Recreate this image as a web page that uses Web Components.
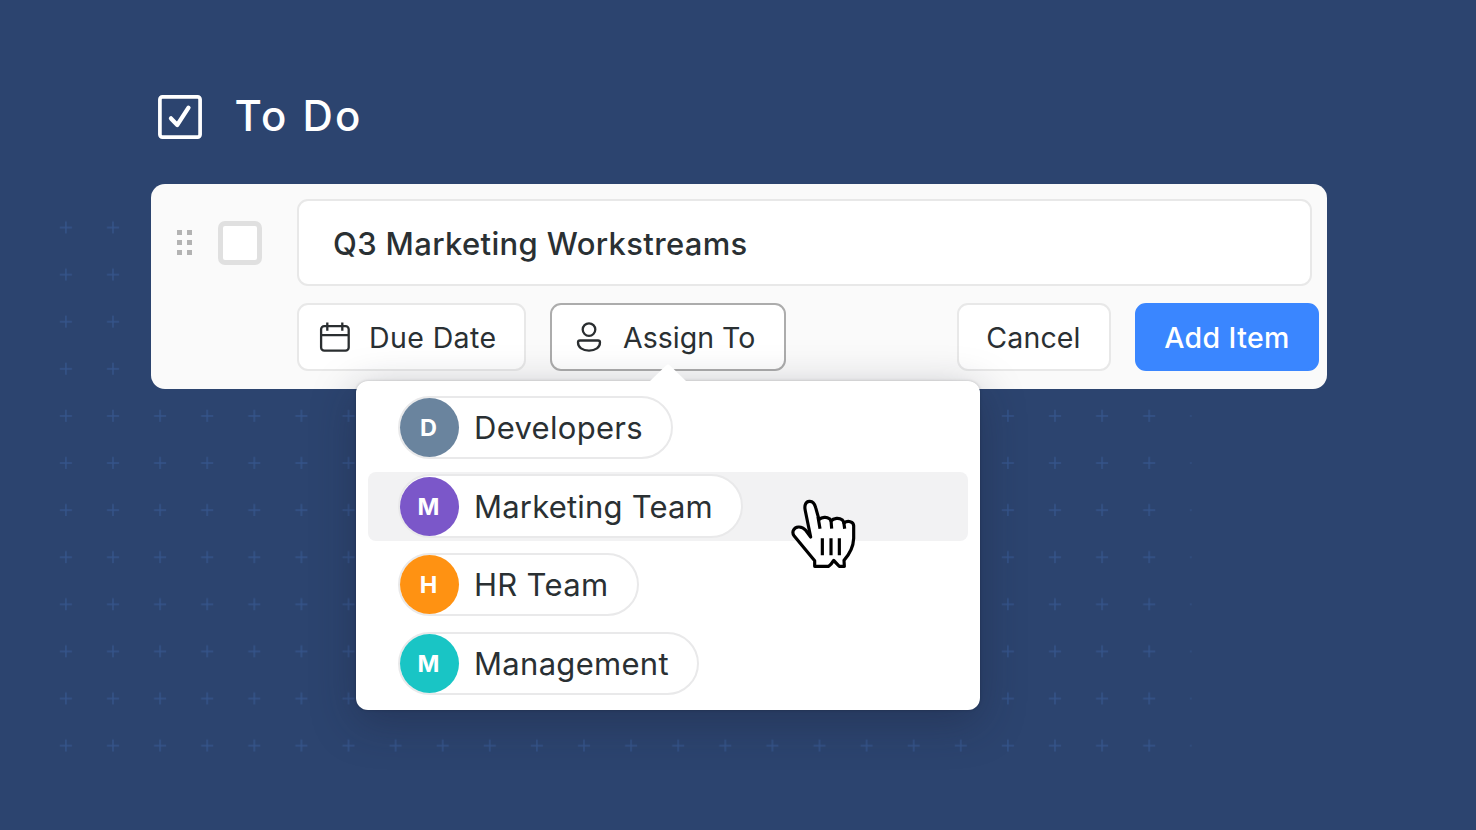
<!DOCTYPE html>
<html lang="en">
<head>
<meta charset="utf-8">
<title>To Do</title>
<style>
    body {
        margin: 0;
        width: 1476px;
        height: 830px;
        overflow: hidden;
        background: #2c446f;
        color: #2a3033;
        font-family: Inter, "Liberation Sans", sans-serif;
    }
</style>
</head>
<body>
<todo-board>
    <todo-heading slot="heading">To Do</todo-heading>
    <todo-card text="Q3 Marketing Workstreams">
        <todo-button slot="tools" icon="calendar" style="--width: 229px; --pad: 20.5px; --icon-gap: 18px; --spacing: 0.4px">Due Date</todo-button>
        <todo-button slot="tools" icon="person" active style="--width: 236px; --pad: 21px; --icon-gap: 18px; --spacing: 0px">Assign To
            <assign-menu slot="menu">
                <assign-option initial="D" color="#6a849e" style="--width: 275px">Developers</assign-option>
                <assign-option initial="M" color="#7b57c9" style="--width: 345px; --spacing: 0.2px" active>Marketing Team</assign-option>
                <assign-option initial="H" color="#ff9212" style="--width: 241px">HR Team</assign-option>
                <assign-option initial="M" color="#19c5c5" style="--width: 301px">Management</assign-option>
                <hand-pointer slot="pointer"></hand-pointer>
            </assign-menu>
        </todo-button>
        <todo-button slot="actions" style="--width: 154px; --spacing: 0.15px">Cancel</todo-button>
        <todo-button slot="actions" primary style="--width: 184px; --spacing: 0.4px">Add Item</todo-button>
    </todo-card>
</todo-board>

<script>
const ICONS = {
    calendar: `
        <svg width="32" height="32" viewBox="0 0 32 32" fill="none" stroke="#2a2e30" stroke-width="2.3">
            <rect x="2.1" y="5.1" width="27.6" height="24.5" rx="3.2"/>
            <path d="M2 14.2h28M8.3 1.6v8.2M23.3 1.6v8.2"/>
        </svg>`,
    person: `
        <svg width="32" height="32" viewBox="0 0 32 32" fill="none" stroke="#2a2e30" stroke-width="2.3">
            <circle cx="16" cy="8.6" r="6.3"/>
            <path d="M7 19.5h18q2 0 2 2c0 5-4.5 8.1-11 8.1S5 26.5 5 21.5q0-2 2-2z"/>
        </svg>`
};

// Page area with the faint grid of plus signs behind the content
class TodoBoard extends HTMLElement {
    constructor() {
        super();
        this.attachShadow({ mode: 'open' });
        this.shadowRoot.innerHTML = `
        <style>
            :host {
                display: flex;
                flex-direction: column;
                position: relative;
                box-sizing: border-box;
                height: 830px;
                padding: 92px 149.5px 0 150.5px;
            }
            .grid {
                position: absolute;
                left: 42px;
                top: 204px;
            }
            .content {
                position: relative;
                display: flex;
                flex-direction: column;
                gap: 44px;
            }
        </style>
        <svg class="grid" width="1149.5" height="566">
            <defs>
                <pattern id="plus" x="0.4" width="47.1" height="47.1" patternUnits="userSpaceOnUse">
                    <path d="M17.5 23.5h12M23.5 17.5v12" stroke="#35548a" stroke-width="1.4"/>
                </pattern>
            </defs>
            <rect width="1149.5" height="566" fill="url(#plus)"/>
        </svg>
        <div class="content">
            <slot name="heading"></slot>
            <slot></slot>
        </div>
        `;
    }
}

class TodoHeading extends HTMLElement {
    constructor() {
        super();
        this.attachShadow({ mode: 'open' });
        this.shadowRoot.innerHTML = `
        <style>
            :host {
                display: flex;
                align-items: center;
                gap: 32px;
                height: 48px;
                padding-left: 6px;
                color: white;
                font-size: 42px;
                font-weight: 500;
                letter-spacing: 2.4px;
                line-height: 48px;
            }
            svg {
                margin-top: 1px;
            }
        </style>
        <svg width="46" height="46" viewBox="0 0 46 46" fill="none" stroke="white">
            <rect x="2.9" y="2.9" width="40.2" height="40.2" rx="2.5" stroke-width="3.7"/>
            <path d="M14 24.4l6.3 6.5L31.500 13.700" stroke-width="4.3" stroke-linecap="round" stroke-linejoin="round"/>
        </svg>
        <slot></slot>
        `;
    }
}

class TodoCard extends HTMLElement {
    constructor() {
        super();
        this.attachShadow({ mode: 'open' });
        this.shadowRoot.innerHTML = `
        <style>
            :host {
                display: flex;
                box-sizing: border-box;
                height: 204.5px;
                padding: 15px 7.5px 0 26.5px;
                border-radius: 14px;
                background: #fafafa;
            }
            .handle {
                display: flex;
                align-items: center;
                gap: 26px;
                width: 119.5px;
                height: 87px;
            }
            .grip {
                display: grid;
                grid-template-columns: 5px 5px;
                gap: 5px;
            }
            .grip i {
                height: 5px;
                background: #b3b3b3;
            }
            .check {
                box-sizing: border-box;
                width: 44px;
                height: 44px;
                border: 5px solid #e0e0e0;
                border-radius: 7px;
                background: white;
            }
            .main {
                flex: 1;
                display: flex;
                flex-direction: column;
                gap: 17px;
            }
            .input {
                box-sizing: border-box;
                height: 87px;
                margin-right: 7.5px;
                padding: 2px 0 0 34.5px;
                border: 2.5px solid #e8e8e8;
                border-radius: 11px;
                background: white;
                font-size: 31px;
                font-weight: 500;
                letter-spacing: 0.35px;
                line-height: 82px;
                white-space: nowrap;
            }
            .row {
                display: flex;
                justify-content: space-between;
            }
            .group {
                display: flex;
                gap: 24.5px;
            }
        </style>
        <div class="handle">
            <div class="grip"><i></i><i></i><i></i><i></i><i></i><i></i></div>
            <div class="check"></div>
        </div>
        <div class="main">
            <div class="input"></div>
            <div class="row">
                <div class="group"><slot name="tools"></slot></div>
                <div class="group"><slot name="actions"></slot></div>
            </div>
        </div>
        `;
    }

    connectedCallback() {
        this.shadowRoot.querySelector('.input').textContent = this.getAttribute('text');
    }
}

class TodoButton extends HTMLElement {
    constructor() {
        super();
        this.attachShadow({ mode: 'open' });
        this.shadowRoot.innerHTML = `
        <style>
            :host {
                display: block;
                position: relative;
                width: var(--width);
            }
            .button {
                display: flex;
                align-items: center;
                justify-content: center;
                box-sizing: border-box;
                height: 68px;
                border: 2.5px solid #e8e8e8;
                border-radius: 11px;
                background: white;
                font-size: 28.5px;
                letter-spacing: var(--spacing);
                white-space: nowrap;
            }
            .icon {
                display: flex;
                margin-right: var(--icon-gap);
            }
            .icon:empty {
                display: none;
            }
            :host([icon]) .button {
                justify-content: flex-start;
                padding-left: var(--pad);
            }
            :host([active]) .button {
                border: 2px solid #acacac;
            }
            :host([primary]) .button {
                border-color: #3a86ff;
                background: #3a86ff;
                color: white;
                font-weight: 500;
            }
        </style>
        <div class="button"><span class="icon"></span><span><slot></slot></span></div>
        <slot name="menu"></slot>
        `;
    }

    connectedCallback() {
        this.shadowRoot.querySelector('.icon').innerHTML = ICONS[this.getAttribute('icon')] || '';
    }
}

// Popover that hangs below the button it belongs to
class AssignMenu extends HTMLElement {
    constructor() {
        super();
        this.attachShadow({ mode: 'open' });
        this.shadowRoot.innerHTML = `
        <style>
            :host {
                position: absolute;
                z-index: 1;
                top: 77.5px;
                left: -194px;
                display: flex;
                flex-direction: column;
                gap: 9.6px;
                box-sizing: border-box;
                width: 623.5px;
                height: 329.5px;
                padding: 12.5px 12px 0;
                border-radius: 12px;
                background: white;
                box-shadow: 0 0 3px rgba(0, 0, 0, 0.22), 0 12px 44px rgba(25, 30, 50, 0.34);
            }
            .arrow {
                position: absolute;
                top: -18px;
                left: 292px;
            }
        </style>
        <svg class="arrow" width="40" height="21" viewBox="0 0 40 21">
            <path d="M1.5 18.5L18 2.5q2-1.8 4 0L38.5 18.5V21h-37z" fill="white"/>
        </svg>
        <slot></slot>
        <slot name="pointer"></slot>
        `;
    }
}

class AssignOption extends HTMLElement {
    constructor() {
        super();
        this.attachShadow({ mode: 'open' });
        this.shadowRoot.innerHTML = `
        <style>
            :host {
                display: flex;
                align-items: center;
                box-sizing: border-box;
                height: 69px;
                padding-left: 30px;
                border-radius: 8px;
                --spacing: 0.3px;
            }
            :host([active]) {
                background: #f2f2f3;
            }
            .pill {
                display: flex;
                align-items: center;
                gap: 15px;
                box-sizing: border-box;
                width: var(--width);
                height: 63.5px;
                border: 2px solid #e9e9ea;
                border-radius: 32px;
                background: white;
                font-size: 31px;
                letter-spacing: var(--spacing);
                white-space: nowrap;
            }
            .avatar {
                flex: none;
                width: 59px;
                height: 59px;
                border-radius: 50%;
                color: white;
                font-size: 23.5px;
                font-weight: 700;
                letter-spacing: 0;
                line-height: 59px;
                text-align: center;
                text-indent: -2px;
            }
        </style>
        <div class="pill"><span class="avatar"></span><span><slot></slot></span></div>
        `;
    }

    connectedCallback() {
        const avatar = this.shadowRoot.querySelector('.avatar');
        avatar.textContent = this.getAttribute('initial');
        avatar.style.background = this.getAttribute('color');
    }
}

class HandPointer extends HTMLElement {
    constructor() {
        super();
        this.attachShadow({ mode: 'open' });
        this.shadowRoot.innerHTML = `
        <style>
            :host {
                position: absolute;
                left: 434px;
                top: 117.4px;
            }
            svg {
                display: block;
            }
        </style>
        <svg width="66.7" height="71" viewBox="30 55 200 213" fill="none" stroke="black" stroke-width="9.5" stroke-linejoin="round">
            <path fill="white" d="M92 172L76 94C72 76 77 66 88 65C99 64 104 72 107 84L117 120C126 112 140 111 148 117Q151 119 153 124C161 114 178 114 186 120Q190 124 192 130C202 122 222 124 221 140L221 176C220 202 208 224 192 242L193 260H178Q168 250 161 242Q154 254 146 260H104V243L42 168C34 156 42 143 55 142C66 141 72 146 77 152Z"/>
            <path d="M114 112L120 147M153 122L155 147M191 126L194 147M127 176V227M153 176V227M178 176V227"/>
        </svg>
        `;
    }
}

customElements.define('todo-board', TodoBoard);
customElements.define('todo-heading', TodoHeading);
customElements.define('todo-card', TodoCard);
customElements.define('todo-button', TodoButton);
customElements.define('assign-menu', AssignMenu);
customElements.define('assign-option', AssignOption);
customElements.define('hand-pointer', HandPointer);
</script>
</body>
</html>
